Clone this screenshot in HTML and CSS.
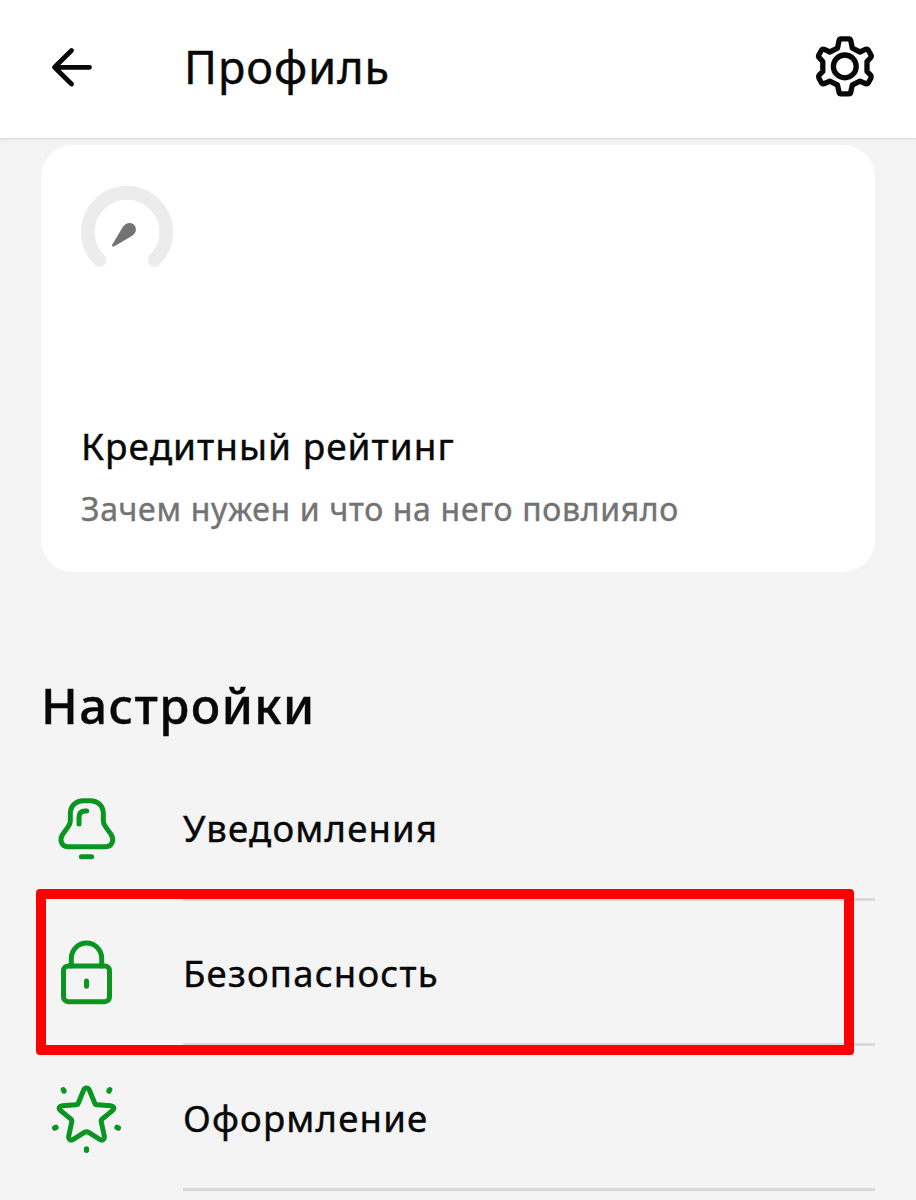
FILE: index.html
```html
<!DOCTYPE html>
<html lang="ru">
<head>
    <meta charset="UTF-8">
    <meta name="viewport" content="width=device-width, initial-scale=1.0">
    <title>Профиль</title>
    <link rel="stylesheet" href="styles.css">
</head>
<body>
    <header class="topbar">
        <svg class="back-icon" viewBox="0 0 44 44">
            <path d="M21.5 5.5L4.5 22.3L21.5 39M5 22.3H39.5"/>
        </svg>
        <h1 class="topbar-title">Профиль</h1>
        <svg class="gear-icon" viewBox="0 0 62 65">
            <path d="M27 4.8H34.8Q36.3 4.8 36.7 6.3L38.3 14.2L46 18L52 15.2Q53.4 14.8 54.2 16L57 21Q57.7 22.4 56.8 23.4L53 27.6V37.4L56.8 41.4Q57.7 42.6 57 44L54.2 49Q53.4 50.2 52 49.8L46 47.2L38.3 51L36.7 58.4Q36.3 59.8 34.8 59.8H27Q25.5 59.8 25.1 58.4L23.5 51L15.8 47.2L9.8 49.8Q8.4 50.2 7.6 49L4.8 44Q4.1 42.6 5 41.4L8.8 37.4V27.6L5 23.4Q4.1 22.4 4.8 21L7.6 16Q8.4 14.8 9.8 15.2L15.8 18L23.5 14.2L25.1 6.3Q25.5 4.8 27 4.8Z"/>
            <circle cx="30.8" cy="32.4" r="11.4"/>
        </svg>
    </header>

    <main class="content">
        <!-- Кредитный рейтинг -->
        <section class="rating-card">
            <svg class="gauge" viewBox="0 0 92 92">
                <path class="gauge-track" d="M18.6 74.1A39.2 39.2 0 1 1 73.4 74.1"/>
                <path class="gauge-needle" d="M31.2 58.8L41.8 41C45 36.400 50 36 53 38.800C56 42 55.400 47 51.200 49.800L33 60.400C31.600 61 30.600 60.200 31.200 58.800Z"/>
            </svg>
            <h2 class="rating-title">Кредитный рейтинг</h2>
            <p class="rating-text">Зачем нужен и что на него повлияло</p>
        </section>

        <!-- Настройки -->
        <h2 class="section-title">Настройки</h2>
        <ul class="menu">
            <li class="menu-item">
                <svg class="menu-icon" viewBox="0 0 216 216">
                    <path d="M101 29H120C144 29 160 45 160 69V90C160 98 162 102 168 109L183 130C194 147 186 167 168 167H53C35 167 27 147 38 130L53 109C59 102 61 98 61 90V69C61 45 77 29 101 29Z"/>
                    <path d="M87 99V79Q87 60 106 60H110M94 197H125"/>
                </svg>
                <span class="menu-label">Уведомления</span>
            </li>
            <li class="menu-item">
                <svg class="menu-icon" viewBox="0 0 216 216">
                    <rect x="40.500" y="90" width="138" height="107" rx="14"/>
                    <path d="M64 90V66.500A45.500 45.500 0 0 1 155 66.500V90M109.500 135V151"/>
                </svg>
                <span class="menu-label">Безопасность</span>
                <div class="highlight"></div>
            </li>
            <li class="menu-item">
                <svg class="menu-icon" viewBox="0 0 216 216">
                    <path d="M101 27C104 19 115 19 118 27L134 66Q136 71 141 71L182 74C191 75 195 82 188 88L158 113Q152 117 154 124L163 166C164 175 157 180 149 175L116 154Q109.500 150 103 154L70 175C62 180 55 175 56 166L65 124Q67 117 61 113L31 88C24 82 28 75 37 74L78 71Q83 71 85 66Z"/>
                    <path class="spark" d="M40 26L42 30M179 26L177 30M14 141L18 139M205 141L201 139M109.500 204V208"/>
                </svg>
                <span class="menu-label">Оформление</span>
            </li>
        </ul>
    </main>
</body>
</html>
```
FILE: styles.css
```css
* {
    margin: 0;
    padding: 0;
    box-sizing: border-box;
}

body {
    font-family: "Noto Sans", "Open Sans", sans-serif;
    background-color: #f4f4f4;
    color: #080808;
    height: 1200px;
    overflow: hidden;
    -webkit-text-stroke: 0.4px;
}

svg {
    display: block;
    flex-shrink: 0;
    fill: none;
    stroke-linecap: round;
    stroke-linejoin: round;
}

.topbar {
    display: flex;
    align-items: center;
    height: 139px;
    padding: 0 40px 5px 50px;
    background-color: #fff;
    border-bottom: 1px solid #dcdcdc;
    box-shadow: 0 1px 5px rgba(0, 0, 0, 0.06);
}

.back-icon {
    width: 44px;
    height: 44px;
    stroke: #080808;
    stroke-width: 4.8;
}

.topbar-title {
    flex: 1;
    margin-left: 90px;
    font-size: 45px;
    line-height: 60px;
    font-weight: 400;
    letter-spacing: 1px;
}

.gear-icon {
    width: 62px;
    height: 65px;
    stroke: #080808;
    stroke-width: 5.3;
}

.content {
    padding: 6px 41px 0;
}

.rating-card {
    height: 427px;
    padding: 41px 40px 0;
    background-color: #fff;
    border-radius: 32px;
}

.gauge {
    width: 92px;
    height: 92px;
}

.gauge-track {
    stroke: #ececec;
    stroke-width: 13.6;
}

.gauge-needle {
    fill: #737373;
}

.rating-title {
    margin-top: 143px;
    font-size: 37px;
    line-height: 50px;
    font-weight: 400;
    letter-spacing: 1px;
}

.rating-text {
    margin-top: 16px;
    font-size: 32px;
    line-height: 44px;
    color: #737373;
    letter-spacing: 0.67px;
    white-space: nowrap;
}

.section-title {
    margin-top: 98px;
    font-size: 49px;
    line-height: 70px;
    font-weight: 500;
    letter-spacing: 1.4px;
}

.menu {
    list-style: none;
    margin-top: 16px;
}

.menu-item {
    position: relative;
    display: flex;
    align-items: center;
    gap: 61px;
    height: 145px;
    padding-left: 9px;
}

.menu-icon {
    width: 72px;
    height: 72px;
    margin-bottom: 4px;
    stroke: #0a9420;
    stroke-width: 15;
}

.menu-label {
    flex: 1;
    height: 145px;
    font-size: 36.5px;
    line-height: 145px;
    border-bottom: 3px solid #d9d9d9;
    letter-spacing: 1.2px;
}

.spark {
    stroke-width: 16;
}

/* Красная рамка вокруг пункта */
.highlight {
    position: absolute;
    left: -5px;
    top: -12px;
    width: 818px;
    height: 166px;
    border: 10px solid #fe0000;
    border-radius: 4px;
}
```
